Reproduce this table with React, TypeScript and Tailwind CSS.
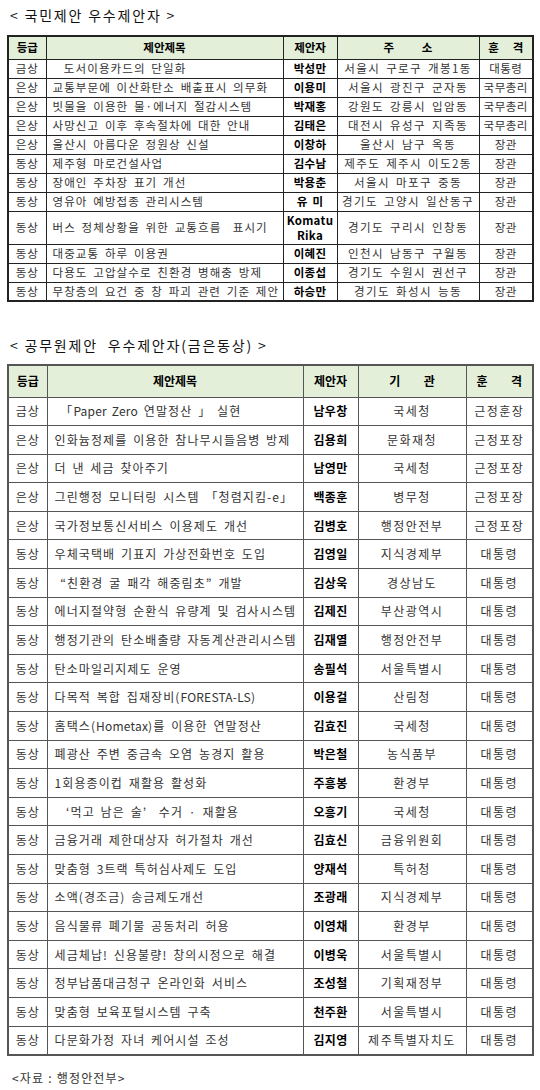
import React from "react";

type Row = [string, string, string, string, string];

const citizen: Row[] = [
  ["금상", "  도서이용카드의 단일화", "박성만", "서울시 구로구 개봉1동", "대통령"],
  ["은상", "교통부문에 이산화탄소 배출표시 의무화", "이용미", "서울시 광진구 군자동", "국무총리"],
  ["은상", "빗물을 이용한 물·에너지 절감시스템", "박재홍", "강원도 강릉시 입암동", "국무총리"],
  ["은상", "사망신고 이후 후속절차에 대한 안내", "김태은", "대전시 유성구 지족동", "국무총리"],
  ["은상", "울산시 아름다운 정원상 신설", "이창하", "울산시 남구 옥동", "장관"],
  ["동상", "제주형 마로건설사업", "김수남", "제주도 제주시 이도2동", "장관"],
  ["동상", "장애인 주차장 표기 개선", "박용춘", "서울시 마포구 중동", "장관"],
  ["동상", "영유아 예방접종 관리시스템", "유 미", "경기도 고양시 일산동구", "장관"],
  ["동상", "버스 정체상황을 위한 교통흐름  표시기", "Komatu|Rika", "경기도 구리시 인창동", "장관"],
  ["동상", "대중교통 하루 이용권", "이혜진", "인천시 남동구 구월동", "장관"],
  ["동상", "다용도 고압살수로 친환경 병해충 방제", "이종섭", "경기도 수원시 권선구", "장관"],
  ["동상", "무창층의 요건 중 창 파괴 관련 기준 제안", "하승만", "경기도 화성시 능동", "장관"],
];

const officials: Row[] = [
  ["금상", " 「Paper Zero 연말정산 」 실현", "남우창", "국세청", "근정훈장"],
  ["은상", "인화늄정제를 이용한 참나무시들음병 방제", "김용희", "문화재청", "근정포장"],
  ["은상", "더 낸 세금 찾아주기", "남영만", "국세청", "근정포장"],
  ["은상", "그린행정 모니터링 시스템 「청렴지킴-e」", "백종훈", "병무청", "근정포장"],
  ["은상", "국가정보통신서비스 이용제도 개선", "김병호", "행정안전부", "근정포장"],
  ["동상", "우체국택배 기표지 가상전화번호 도입", "김영일", "지식경제부", "대통령"],
  ["동상", " “친환경 굴 패각 해중림초” 개발", "김상욱", "경상남도", "대통령"],
  ["동상", "에너지절약형 순환식 유량계 및 검사시스템", "김제진", "부산광역시", "대통령"],
  ["동상", "행정기관의 탄소배출량 자동계산관리시스템", "김재열", "행정안전부", "대통령"],
  ["동상", "탄소마일리지제도 운영", "송필석", "서울특별시", "대통령"],
  ["동상", "다목적 복합 집재장비(FORESTA-LS)", "이용걸", "산림청", "대통령"],
  ["동상", "홈택스(Hometax)를 이용한 연말정산", "김효진", "국세청", "대통령"],
  ["동상", "폐광산 주변 중금속 오염 농경지 활용", "박은철", "농식품부", "대통령"],
  ["동상", "1회용종이컵 재활용 활성화", "주흥봉", "환경부", "대통령"],
  ["동상", "  ‘먹고 남은 술’  수거 · 재활용", "오흥기", "국세청", "대통령"],
  ["동상", "금융거래 제한대상자 허가절차 개선", "김효신", "금융위원회", "대통령"],
  ["동상", "맞춤형 3트랙 특허심사제도 도입", "양재석", "특허청", "대통령"],
  ["동상", "소액(경조금) 송금제도개선", "조광래", "지식경제부", "대통령"],
  ["동상", "음식물류 폐기물 공동처리 허용", "이영채", "환경부", "대통령"],
  ["동상", "세금체납! 신용불량! 창의시정으로 해결", "이병욱", "서울특별시", "대통령"],
  ["동상", "정부납품대금청구 온라인화 서비스", "조성철", "기획재정부", "대통령"],
  ["동상", "맞춤형 보육포털시스템 구축", "천주환", "서울특별시", "대통령"],
  ["동상", "다문화가정 자녀 케어시설 조성", "김지영", "제주특별자치도", "대통령"],
];

// latin runs get normal spacing, hangul keeps the wide gulim-like spacing
function Title({ text }: { text: string }) {
  const parts = text.split(/([A-Za-z][A-Za-z -]*[A-Za-z])/);
  return (
    <>
      {parts.map((p, i) =>
        i % 2 === 1 ? (
          <span key={i} className="tracking-[0.2px]">
            {p}
          </span>
        ) : (
          p
        )
      )}
    </>
  );
}

function CitizenTable() {
  const td = "border border-[#222] p-0 overflow-hidden whitespace-pre";
  return (
    <table className="w-[525px] table-fixed border-collapse border-2 border-[#222] text-[11.5px] tracking-[1.4px] [word-spacing:2px] text-[#333]">
      <colgroup>
        <col className="w-[38px]" />
        <col className="w-[237px]" />
        <col className="w-[54px]" />
        <col className="w-[142px]" />
        <col className="w-[54px]" />
      </colgroup>
      <thead>
        <tr className="h-[23px] bg-[#e3efd9] font-bold text-black tracking-normal">
          <th className={td}>등급</th>
          <th className={td}>제안제목</th>
          <th className={td}>제안자</th>
          <th className={td}>주      소</th>
          <th className={td}>훈   격</th>
        </tr>
      </thead>
      <tbody>
        {citizen.map((r, i) => {
          const tall = r[2].includes("|");
          return (
            <tr key={i} className={tall ? "h-[33px]" : "h-[19px]"}>
              <td className={`${td} text-center tracking-[1px]`}>{r[0]}</td>
              <td className={`${td} pl-[6px] tracking-[1.1px]`}>{r[1]}</td>
              <td className={`${td} text-center font-bold leading-[15px] tracking-[0.3px] text-black`}>
                {tall
                  ? r[2].split("|").map((s) => <div key={s}>{s}</div>)
                  : r[2]}
              </td>
              <td className={`${td} text-center`}>{r[3]}</td>
              <td className={`${td} text-center tracking-[0.5px]`}>{r[4]}</td>
            </tr>
          );
        })}
      </tbody>
    </table>
  );
}

function OfficialTable() {
  const td = "border border-[#555] p-0 overflow-hidden whitespace-pre";
  return (
    <table className="w-[525px] table-fixed border-collapse border-2 border-[#555] text-[12px] tracking-[1.5px] [word-spacing:2px] text-[#333]">
      <colgroup>
        <col className="w-[39px]" />
        <col className="w-[256px]" />
        <col className="w-[55px]" />
        <col className="w-[108px]" />
        <col className="w-[67px]" />
      </colgroup>
      <thead>
        <tr className="h-[32px] bg-[#e3efd9] font-bold text-black tracking-normal">
          <th className={td}>등급</th>
          <th className={td}>제안제목</th>
          <th className={td}>제안자</th>
          <th className={td}>기     관</th>
          <th className={td}>훈     격</th>
        </tr>
      </thead>
      <tbody>
        {officials.map((r, i) => (
          <tr key={i} className="h-[28.6px]">
            <td className={`${td} text-center tracking-[1px]`}>{r[0]}</td>
            <td className={`${td} pl-[7px] tracking-[1.1px]`}>
              <Title text={r[1]} />
            </td>
            <td className={`${td} text-center font-bold tracking-[0.3px] text-black`}>{r[2]}</td>
            <td className={`${td} text-center`}>{r[3]}</td>
            <td className={`${td} text-center`}>{r[4]}</td>
          </tr>
        ))}
      </tbody>
    </table>
  );
}

export default function App() {
  return (
    <div
      className="w-[540px] bg-white px-[7px] pb-[4px] pt-[6px]"
      style={{ fontFamily: '"Noto Sans CJK KR", "Noto Sans", sans-serif' }}
    >
      <div className="mb-[11px] whitespace-pre pl-[3px] text-[14px] leading-[18px] tracking-[1.8px] text-[#111]">
        {"< 국민제안 우수제안자 >"}
      </div>
      <CitizenTable />
      <div className="mb-[10px] mt-[34px] whitespace-pre pl-[3px] text-[14px] leading-[18px] tracking-[1.8px] text-[#111]">
        {"< 공무원제안  우수제안자(금은동상) >"}
      </div>
      <OfficialTable />
      <div className="mt-[14px] whitespace-pre pl-[5px] text-[12px] leading-[16px] tracking-[1.2px] text-[#333]">
        {"<자료 : 행정안전부>"}
      </div>
    </div>
  );
}
